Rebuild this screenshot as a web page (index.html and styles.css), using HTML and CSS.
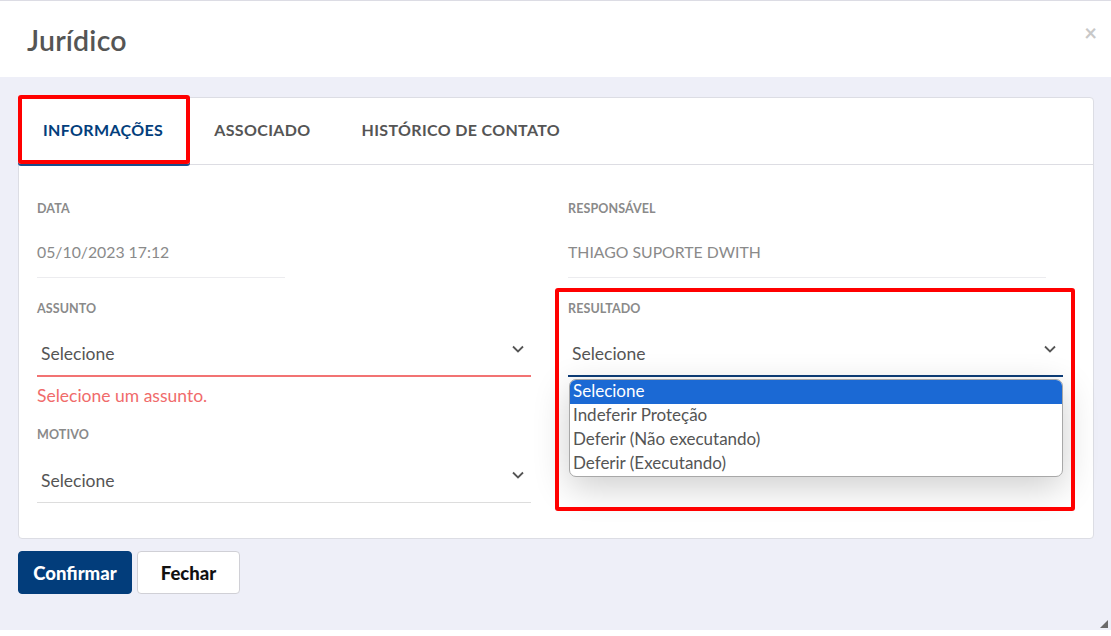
FILE: index.html
```html
<!DOCTYPE html>
<html lang="pt-BR">
<head>
<meta charset="utf-8">
<title>Jurídico</title>
<link rel="stylesheet" href="styles.css">
</head>
<body>
<div class="modal">
  <header class="modal-header">
    <h1 class="modal-title">Jurídico</h1>
    <span class="close">&times;</span>
  </header>
  <div class="modal-body">
    <section class="card">
      <nav class="tabs">
        <div class="tab active">INFORMAÇÕES</div>
        <div class="tab">ASSOCIADO</div>
        <div class="tab">HISTÓRICO DE CONTATO</div>
        <span class="mark mark-tab"></span>
      </nav>
      <div class="form">
        <div class="col">
          <div class="field">
            <label class="label">DATA</label>
            <div class="value short">05/10/2023 17:12</div>
          </div>
          <div class="field">
            <label class="label">ASSUNTO</label>
            <div class="select invalid">
              <span>Selecione</span>
              <svg class="chev" viewBox="0 0 12 8" width="12" height="8"><path d="M1 1.5l5 5 5-5" fill="none" stroke="#555" stroke-width="1.8"/></svg>
            </div>
            <div class="error">Selecione um assunto.</div>
          </div>
          <div class="field after-error">
            <label class="label">MOTIVO</label>
            <div class="select">
              <span>Selecione</span>
              <svg class="chev" viewBox="0 0 12 8" width="12" height="8"><path d="M1 1.5l5 5 5-5" fill="none" stroke="#555" stroke-width="1.8"/></svg>
            </div>
          </div>
        </div>
        <div class="col">
          <div class="field">
            <label class="label">RESPONSÁVEL</label>
            <div class="value wide">THIAGO SUPORTE DWITH</div>
          </div>
          <div class="field result">
            <label class="label">RESULTADO</label>
            <div class="select-wrap">
              <div class="select focused">
                <span>Selecione</span>
                <svg class="chev" viewBox="0 0 12 8" width="12" height="8"><path d="M1 1.5l5 5 5-5" fill="none" stroke="#555" stroke-width="1.8"/></svg>
              </div>
              <ul class="listbox">
                <li class="selected">Selecione</li>
                <li>Indeferir Proteção</li>
                <li>Deferir (Não executando)</li>
                <li>Deferir (Executando)</li>
              </ul>
            </div>
            <span class="mark mark-result"></span>
          </div>
        </div>
      </div>
    </section>
    <div class="actions">
      <button class="btn primary">Confirmar</button>
      <button class="btn">Fechar</button>
    </div>
    <span class="resize"></span>
  </div>
</div>
</body>
</html>
```

FILE: styles.css
```css
* { box-sizing: border-box; }
html, body { margin: 0; padding: 0; }
body {
  width: 1111px;
  height: 636px;
  background: #fff;
  font-family: "Source Sans Pro", Lato, "Noto Sans", sans-serif;
  color: #555;
  overflow: hidden;
}

.modal {
  height: 630px;
  display: flex;
  flex-direction: column;
  border-top: 1px solid #dcdce4;
}

.modal-header {
  height: 76px;
  background: #fff;
  display: flex;
  align-items: center;
  justify-content: space-between;
  padding: 0 12px 0 27px;
}
.modal-title {
  margin: 0;
  font-size: 28.5px;
  font-weight: 600;
  color: #555;
  letter-spacing: 0.2px;
  padding-top: 2px;
}
.close {
  font-size: 22px;
  color: #c8c8c8;
  font-weight: 700;
  line-height: 1;
  margin-top: -12px;
  margin-right: 2px;
}

.modal-body {
  flex: 1;
  background: #eeeff8;
  padding: 20px 18px 0 18px;
  position: relative;
}

.card {
  background: #fff;
  border: 1px solid #dcdde4;
  border-radius: 4px;
  height: 442px;
  width: 1076px;
}

/* tab strip */
.tabs {
  display: flex;
  height: 67px;
  border-bottom: 1px solid #dddde3;
  position: relative;
  padding-left: 24px;
  padding-bottom: 4px;
}
.tab {
  font-size: 16px;
  font-weight: 700;
  letter-spacing: 0.35px;
  color: #555;
  display: flex;
  align-items: center;
  margin-right: 51px;
}
.tab.active {
  color: #033e7c;
}
.mark {
  position: absolute;
  border: 4px solid #ff0000;
  border-radius: 3px;
}
.mark-tab {
  left: -1px;
  top: -3px;
  width: 172px;
  height: 69px;
  box-shadow: 0 2px 0 #1a4d8c;
}

/* form grid */
.form {
  display: grid;
  grid-template-columns: 494px 495px;
  column-gap: 37px;
  padding: 35px 0 0 18px;
}
.field {
  display: flex;
  flex-direction: column;
  position: relative;
}
.field + .field { margin-top: 22px; }
.field.after-error { margin-top: 20px; }
.label {
  font-size: 12.5px;
  font-weight: 700;
  color: #8a8a8a;
  height: 18px;
  line-height: 18px;
  letter-spacing: 0.1px;
}
.value {
  margin-top: 24px;
  font-size: 15.8px;
  color: #8a8a8a;
  height: 36px;
  border-bottom: 1px solid #ececef;
}
.value.short { width: 248px; }
.value.wide { width: 478px; }

.select {
  margin-top: 14px;
  height: 45px;
  display: flex;
  align-items: center;
  justify-content: space-between;
  padding: 0 7px 0 4px;
  font-size: 17.5px;
  color: #555;
  border-bottom: 1px solid #ddd;
}
.select.invalid { border-bottom: 2px solid #f27373; }
.select.focused { border-bottom: 2px solid #0d3d78; }
.chev { margin-top: -10px; }

.error {
  color: #f06b6b;
  font-size: 17.5px;
  margin-top: 9px;
  height: 20px;
  line-height: 20px;
}

/* open listbox of the result select */
.select-wrap { position: relative; }
.listbox {
  position: absolute;
  top: 100%;
  margin: 2px 0 0 0;
  left: 1px;
  width: 494px;
  padding: 0;
  list-style: none;
  background: #fff;
  border: 1px solid #a8a8a8;
  border-radius: 7px;
  overflow: hidden;
  box-shadow: 0 10px 36px rgba(0, 0, 0, 0.2);
  z-index: 2;
}
.listbox li {
  height: 24px;
  line-height: 22px;
  font-size: 17px;
  color: #555;
  padding-left: 3px;
}
.listbox li.selected {
  background: #1b69d4;
  color: #fff;
}
.mark-result {
  left: -13px;
  top: -12px;
  width: 520px;
  height: 223px;
  z-index: 3;
}

/* footer buttons */
.actions {
  display: flex;
  gap: 5px;
  margin-top: 12px;
}
.btn {
  height: 43px;
  border-radius: 4px;
  font-family: inherit;
  font-size: 18.5px;
  font-weight: 900;
  border: 1px solid #d0d0d6;
  background: #fff;
  color: #111;
  padding: 0;
  width: 103px;
}
.btn.primary {
  background: #023d7b;
  border-color: #023d7b;
  color: #fff;
  width: 114px;
}

.resize {
  position: absolute;
  right: 3px;
  bottom: 2px;
  width: 0;
  height: 0;
  border-left: 8px solid transparent;
  border-bottom: 8px solid #6a6a6a;
}
```
